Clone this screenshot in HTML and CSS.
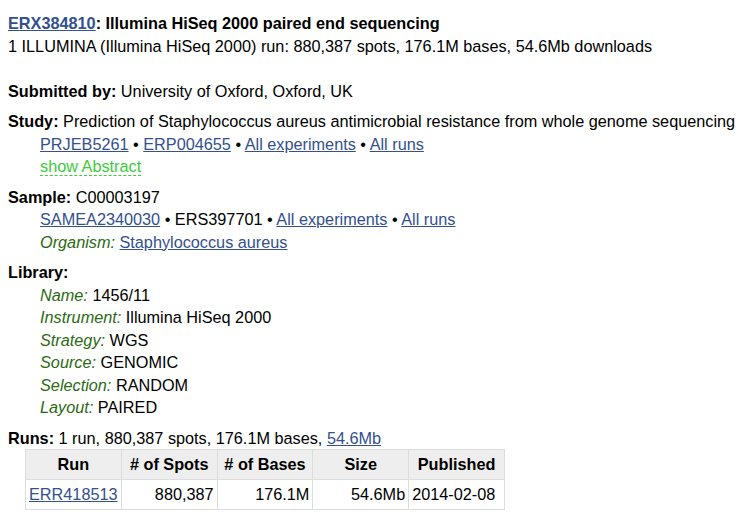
FILE: index.html
```html
<!DOCTYPE html>
<html>
<head>
<meta charset="utf-8">
<link rel="stylesheet" href="styles.css">
</head>
<body>
<div class="page">
  <div class="head">
    <div class="title"><a href="#">ERX384810</a>: Illumina HiSeq 2000 paired end sequencing</div>
    <div>1 ILLUMINA (Illumina HiSeq 2000) run: 880,387 spots, 176.1M bases, 54.6Mb downloads</div>
  </div>

  <div class="sec"><b>Submitted by:</b> University of Oxford, Oxford, UK</div>

  <div class="sec">
    <div class="nowrap"><b>Study:</b> Prediction of Staphylococcus aureus antimicrobial resistance from whole genome sequencing</div>
    <div class="ind"><a href="#">PRJEB5261</a> • <a href="#">ERP004655</a> • <a href="#">All experiments</a> • <a href="#">All runs</a></div>
    <div class="ind"><span class="abs">show Abstract</span></div>
  </div>

  <div class="sec">
    <div><b>Sample:</b> C00003197</div>
    <div class="ind"><a href="#">SAMEA2340030</a> • ERS397701 • <a href="#">All experiments</a> • <a href="#">All runs</a></div>
    <div class="ind"><i class="lbl">Organism:</i> <a href="#">Staphylococcus aureus</a></div>
  </div>

  <div class="sec">
    <div><b>Library:</b></div>
    <div class="ind"><i class="lbl">Name:</i> 1456/11</div>
    <div class="ind"><i class="lbl">Instrument:</i> Illumina HiSeq 2000</div>
    <div class="ind"><i class="lbl">Strategy:</i> WGS</div>
    <div class="ind"><i class="lbl">Source:</i> GENOMIC</div>
    <div class="ind"><i class="lbl">Selection:</i> RANDOM</div>
    <div class="ind"><i class="lbl">Layout:</i> PAIRED</div>
  </div>

  <div class="sec">
    <div><b>Runs:</b> 1 run, 880,387 spots, 176.1M bases, <a href="#">54.6Mb</a></div>
    <table class="runs">
      <thead>
        <tr><th>Run</th><th># of Spots</th><th># of Bases</th><th>Size</th><th>Published</th></tr>
      </thead>
      <tbody>
        <tr><td><a href="#">ERR418513</a></td><td class="num">880,387</td><td class="num">176.1M</td><td class="num">54.6Mb</td><td>2014-02-08</td></tr>
      </tbody>
    </table>
  </div>
</div>
</body>
</html>
```

FILE: styles.css
```css
html, body {
  margin: 0;
  padding: 0;
  background: #fff;
}
body {
  font-family: "Liberation Sans", Arial, sans-serif;
  font-size: 16.25px;
  line-height: 22.5px;
  color: #000;
}
.page {
  padding: 12px 0 0 8px;
}
.nowrap {
  white-space: nowrap;
}
a {
  color: #33508f;
  text-decoration: underline;
}
.title {
  font-weight: bold;
}
.head {
  margin-bottom: 22.5px;
}
.sec {
  margin-bottom: 8px;
}
.ind {
  padding-left: 32px;
}
.lbl {
  color: #2b6a12;
}
.abs {
  color: #3ccc3c;
  border-bottom: 1px dashed #3ccc3c;
  line-height: 18px;
  display: inline-block;
}
.runs {
  border-collapse: collapse;
  margin-left: 17px;
  table-layout: fixed;
  width: 480px;
}
.runs th, .runs td {
  border: 1px solid #ddd;
  padding: 4px 3px;
  height: 21px;
  line-height: 21px;
  box-sizing: content-box;
  white-space: nowrap;
}
.runs th {
  background: #eee;
  font-weight: bold;
  text-align: center;
}
.runs td {
  text-align: left;
}
.runs td.num {
  text-align: right;
}
```
